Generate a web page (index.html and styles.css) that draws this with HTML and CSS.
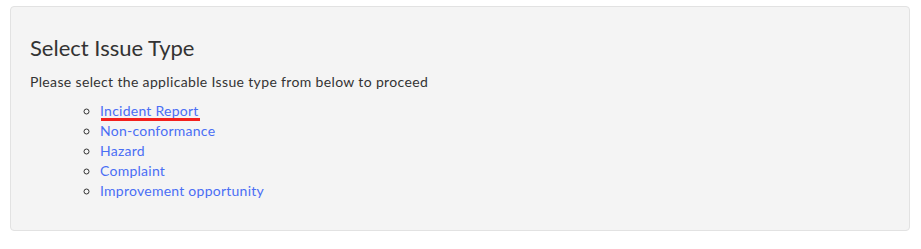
FILE: index.html
```html
<!DOCTYPE html>
<html lang="en">
<head>
    <meta charset="UTF-8">
    <title>Select Issue Type</title>
    <link rel="stylesheet" href="styles.css">
</head>
<body>
    <div class="page">
        <div class="issue-card">
            <h2>Select Issue Type</h2>
            <p>Please select the applicable Issue type from below to proceed</p>
            <ul class="issue-list">
                <li><a href="#" class="marked">Incident Report</a></li>
                <li><a href="#">Non-conformance</a></li>
                <li><a href="#">Hazard</a></li>
                <li><a href="#">Complaint</a></li>
                <li><a href="#">Improvement opportunity</a></li>
            </ul>
        </div>
    </div>
</body>
</html>
```

FILE: styles.css
```css
body, html { margin: 0; padding: 0; background: #fff; font-family: "Lato", sans-serif; color: #333; }
.page { padding: 6px 11px 0 10px; }
.issue-card { background-color: #f4f4f4; border: 1px solid #e2e2e2; border-radius: 4px; padding: 27px 19px 29px; }
.issue-card h2 { margin: 0 0 10px; font-size: 22px; font-weight: 400; line-height: 28px; color: #333; }
.issue-card p { margin: 0 0 9px; font-size: 14px; line-height: 20px; color: #333; letter-spacing: 0.35px; }
.issue-list { margin: 0; padding-left: 70px; list-style: circle; font-size: 14px; line-height: 20px; }
.issue-list a { color: #4a6ef5; text-decoration: none; letter-spacing: 0.25px; }
.issue-list a.marked { position: relative; }
.issue-list a.marked::after { content: ""; position: absolute; left: 1px; right: -1px; bottom: -2px; height: 3px; background: #f4201c; }
```
